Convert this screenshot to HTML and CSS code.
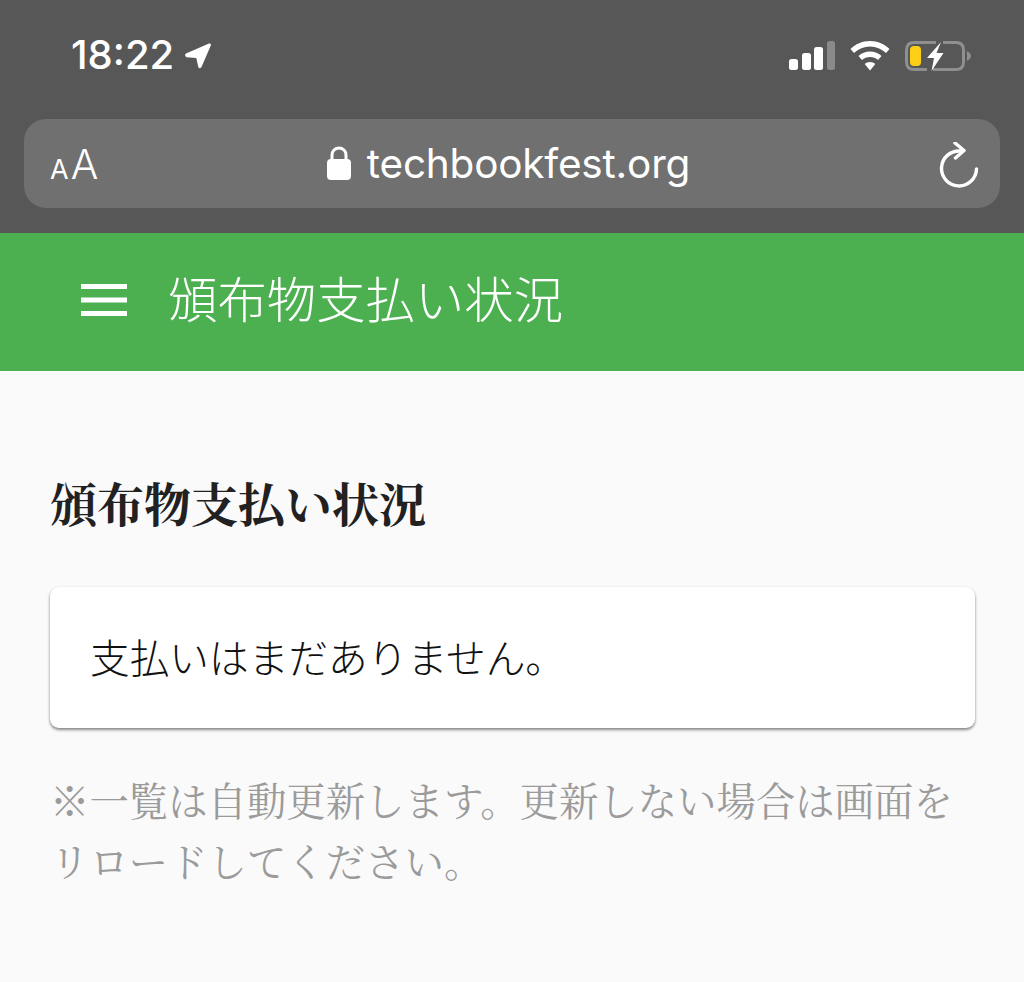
FILE: index.html
```html
<!DOCTYPE html>
<html lang="ja">
<head>
<meta charset="utf-8">
<title>頒布物支払い状況</title>
<link rel="stylesheet" href="styles.css">
</head>
<body>
<div class="browser">
  <div class="status">
    <div class="status-left">
      <span class="time">18:22</span>
      <svg class="loc" width="28" height="28" viewBox="0 0 28 28"><path d="M2 11.500 L25 1.500 Q27.500 1 26.800 3.500 L17.500 25 Q15.500 27.500 14.300 25 L12.300 16 L2.400 15.200 Q0 13 2 11.500Z" fill="#fff"/></svg>
    </div>
    <div class="status-right">
      <svg class="signal" width="46" height="29" viewBox="0 0 46 29">
        <rect x="0" y="18" width="9" height="11" rx="2.500" fill="#fff"/>
        <rect x="13" y="12" width="9" height="17" rx="2.500" fill="#fff"/>
        <rect x="25" y="6" width="9" height="23" rx="2.500" fill="#fff"/>
        <rect x="38" y="0" width="8" height="29" rx="2.500" fill="#8a8a8a"/>
      </svg>
      <svg class="wifi" width="40" height="30" viewBox="0 0 40 30">
        <path d="M20 0 C28 0 34.500 3 39.500 8 L36 12 C31.500 8 26 5.600 20 5.600 C14 5.600 8.500 8 4 12 L0.500 8 C5.500 3 12 0 20 0Z" fill="#fff"/>
        <path d="M20 10.500 C24.500 10.500 28.500 12 31.500 15 L28 19 C26 17.300 23 16 20 16 C17 16 14 17.300 12 19 L8.500 15 C11.500 12 15.500 10.500 20 10.500Z" fill="#fff"/>
        <path d="M20 21 C22.200 21 24 21.700 25.300 23 L20 29.500 L14.700 23 C16 21.700 17.800 21 20 21Z" fill="#fff"/>
      </svg>
      <svg class="battery" width="66" height="30" viewBox="0 0 66 30">
        <path d="M31 1.500 H9 Q1.500 1.500 1.500 9 V21 Q1.500 28.500 9 28.500 H22 M28 28.500 H51 Q58.500 28.500 58.500 21 V9 Q58.500 1.500 51 1.500 H38" fill="none" stroke="#8f8f8f" stroke-width="3"/>
        <rect x="5" y="5" width="11" height="20" rx="4" fill="#fdd017"/>
        <path d="M36 1 L22 17 H29 L26.500 30 L38.500 12 H31.500Z" fill="#fff"/>
        <path d="M62 10 Q66 12.500 66 15 Q66 17.500 62 20Z" fill="#8f8f8f"/>
      </svg>
    </div>
  </div>
  <div class="address">
    <div class="aa"><span class="aa-small">A</span><span class="aa-big">A</span></div>
    <div class="url">
      <svg class="lock" width="24" height="34" viewBox="0 0 24 34"><path d="M5 14 V9 A7 7 0 0 1 19 9 V14" fill="none" stroke="#fff" stroke-width="3"/><rect x="0" y="13" width="24" height="21" rx="4" fill="#fff"/></svg>
      <span>techbookfest.org</span>
    </div>
    <svg class="reload" width="40" height="46" viewBox="0 0 40 46">
      <path d="M21.500 9 A17.500 17.500 0 1 0 37.500 27" fill="none" stroke="#fff" stroke-width="3.400" stroke-linecap="round"/>
      <path d="M16 1 L25 8.500 L16.500 16" fill="none" stroke="#fff" stroke-width="3.400" stroke-linecap="round" stroke-linejoin="round"/>
    </svg>
  </div>
</div>
<header class="appbar">
  <svg class="menu" width="46" height="32" viewBox="0 0 46 32"><path d="M0 0h46v5H0zM0 13.500h46v5H0zM0 27h46v5H0z" fill="#fff"/></svg>
  <h1 class="appbar-title">頒布物支払い状況</h1>
</header>
<main class="content">
  <h2 class="heading">頒布物支払い状況</h2>
  <div class="card">支払いはまだありません。</div>
  <p class="note">※一覧は自動更新します。更新しない場合は画面をリロードしてください。</p>
</main>
</body>
</html>
```
FILE: styles.css
```css
* { box-sizing: border-box; }
html, body { margin: 0; padding: 0; }
body {
  width: 1024px;
  height: 982px;
  overflow: hidden;
  background: #fafafa;
  font-family: "Noto Sans CJK JP", "Noto Sans", sans-serif;
}
.browser {
  height: 233px;
  background: #575757;
  padding: 0 24px;
  display: flex;
  flex-direction: column;
}
.status {
  height: 119px;
  display: flex;
  justify-content: space-between;
  padding: 33px 29px 0 47px;
}
.status-left { display: flex; align-items: flex-start; gap: 10px; }
.time {
  font-family: "Inter", "Liberation Sans", sans-serif;
  font-weight: 500;
  font-size: 40px;
  line-height: 44px;
  color: #fff;
}
.loc { margin-top: 9px; }
.status-right { display: flex; align-items: flex-start; gap: 15px; padding-top: 8px; }
.address {
  height: 89px;
  background: #707070;
  border-radius: 22px;
  display: flex;
  align-items: center;
  justify-content: space-between;
  padding: 0 21px 0 26px;
  color: #fff;
}
.aa {
  display: flex;
  align-items: baseline;
  gap: 2px;
  width: 28px;
  font-family: "Inter", "Liberation Sans", sans-serif;
}
.aa-small { font-size: 27px; }
.aa-big { font-size: 41px; font-weight: 300; }
.url {
  display: flex;
  align-items: center;
  gap: 16px;
  font-family: "Inter", "Liberation Sans", sans-serif;
  font-size: 40.5px;
  font-weight: 400;
  letter-spacing: -0.2px;
}
.lock { margin-top: -2px; }
.reload { margin-top: 2px; }
.appbar {
  height: 138px;
  background: #4caf50;
  display: flex;
  align-items: center;
  gap: 41px;
  padding: 0 0 4px 81px;
  color: #fff;
}
.appbar-title {
  margin: -7px 0 0;
  font-size: 49.4px;
  font-weight: 300;
  line-height: 60px;
}
.content { padding: 100px 49px 0 50px; }
.heading {
  margin: 0;
  font-family: "Noto Serif CJK JP", "Liberation Serif", serif;
  font-size: 47px;
  font-weight: 700;
  line-height: 62px;
  color: #212121;
}
.card {
  margin-top: 54px;
  height: 141px;
  padding: 0 40px 4px;
  display: flex;
  align-items: center;
  background: #fff;
  border-radius: 9px;
  box-shadow: 0 2px 3px rgba(0,0,0,.45), 0 0 3px rgba(0,0,0,.06);
  font-size: 39.7px;
  font-weight: 300;
  color: #111;
}
.note {
  margin: 41px 0 0;
  font-family: "Noto Serif CJK JP", "Liberation Serif", serif;
  font-size: 39.4px;
  line-height: 61px;
  color: #9b9b9b;
  font-weight: 400;
}
```
